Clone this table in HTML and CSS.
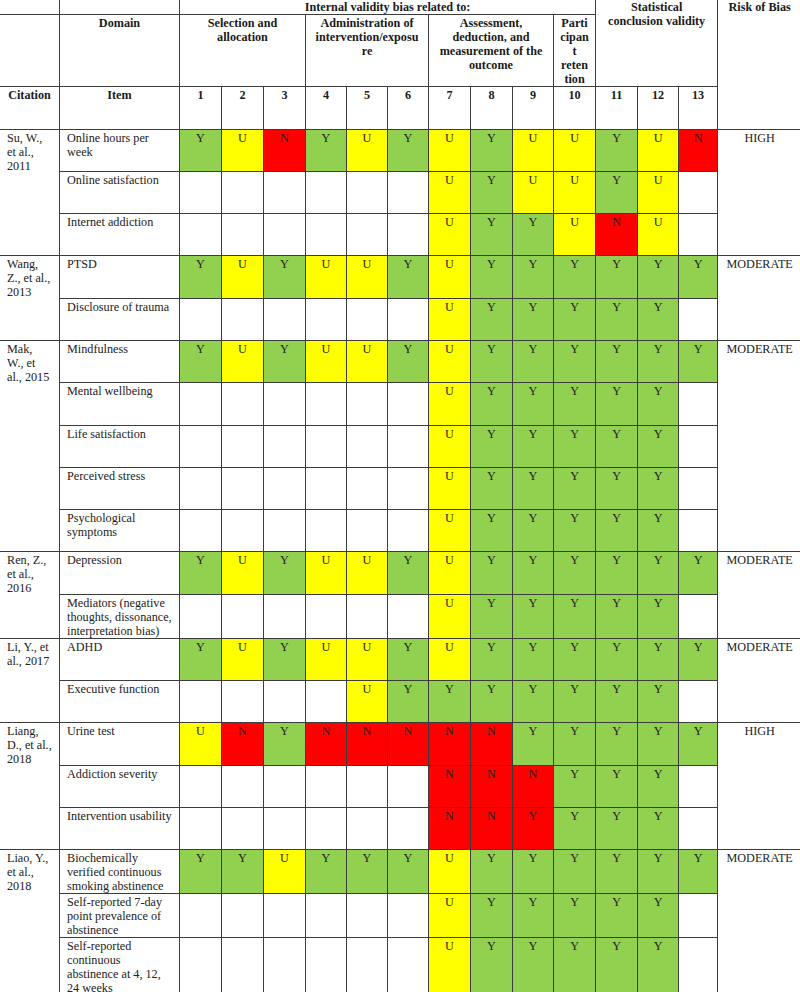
FILE: index.html
```html
<!DOCTYPE html>
<html>
<head>
<meta charset="utf-8">
<link rel="stylesheet" href="styles.css">
</head>
<body>
<table class="rob">
<colgroup>
<col class="c-cit"><col class="c-item">
<col class="c42"><col class="c42"><col class="c42">
<col class="c41"><col class="c41"><col class="c41">
<col class="c42"><col class="c42"><col class="c41"><col class="c42">
<col class="c42"><col class="c41"><col class="c39">
<col class="c-rob">
</colgroup>
<thead>
<tr class="h1">
<td></td><td></td>
<th colspan="10">Internal validity bias related to:</th>
<th colspan="3" rowspan="2" class="stat">Statistical conclusion validity</th>
<th rowspan="3">Risk of Bias</th>
</tr>
<tr class="h2">
<td></td>
<th>Domain</th>
<th colspan="3">Selection and allocation</th>
<th colspan="3" class="admin">Administration of intervention/&#8288;exposure</th>
<th colspan="3">Assessment, deduction, and measurement of the outcome</th>
<th class="narrow">Participant retention</th>
</tr>
<tr class="h3">
<th>Citation</th><th>Item</th>
<th>1</th><th>2</th><th>3</th><th>4</th><th>5</th><th>6</th><th>7</th><th>8</th><th>9</th><th>10</th><th>11</th><th>12</th><th>13</th>
</tr>
</thead>
<tbody>
<!-- Su -->
<tr class="row">
<td class="cit" rowspan="3">Su, W., et al., 2011</td>
<td class="item">Online hours per week</td>
<td class="g">Y</td><td class="y">U</td><td class="r">N</td><td class="g">Y</td><td class="y">U</td><td class="g">Y</td><td class="y">U</td><td class="g">Y</td><td class="y">U</td><td class="y">U</td><td class="g">Y</td><td class="y">U</td><td class="r">N</td>
<td class="risk" rowspan="3">HIGH</td>
</tr>
<tr class="row">
<td class="item">Online satisfaction</td>
<td></td><td></td><td></td><td></td><td></td><td></td><td class="y">U</td><td class="g">Y</td><td class="y">U</td><td class="y">U</td><td class="g">Y</td><td class="y">U</td><td></td>
</tr>
<tr class="row">
<td class="item">Internet addiction</td>
<td></td><td></td><td></td><td></td><td></td><td></td><td class="y">U</td><td class="g">Y</td><td class="g">Y</td><td class="y">U</td><td class="r">N</td><td class="y">U</td><td></td>
</tr>
<!-- Wang -->
<tr class="row">
<td class="cit" rowspan="2">Wang, Z., et al., 2013</td>
<td class="item">PTSD</td>
<td class="g">Y</td><td class="y">U</td><td class="g">Y</td><td class="y">U</td><td class="y">U</td><td class="g">Y</td><td class="y">U</td><td class="g">Y</td><td class="g">Y</td><td class="g">Y</td><td class="g">Y</td><td class="g">Y</td><td class="g">Y</td>
<td class="risk" rowspan="2">MODERATE</td>
</tr>
<tr class="row">
<td class="item">Disclosure of trauma</td>
<td></td><td></td><td></td><td></td><td></td><td></td><td class="y">U</td><td class="g">Y</td><td class="g">Y</td><td class="g">Y</td><td class="g">Y</td><td class="g">Y</td><td></td>
</tr>
<!-- Mak -->
<tr class="row">
<td class="cit" rowspan="5">Mak, <span class="keep">W., et</span> al., 2015</td>
<td class="item">Mindfulness</td>
<td class="g">Y</td><td class="y">U</td><td class="g">Y</td><td class="y">U</td><td class="y">U</td><td class="g">Y</td><td class="y">U</td><td class="g">Y</td><td class="g">Y</td><td class="g">Y</td><td class="g">Y</td><td class="g">Y</td><td class="g">Y</td>
<td class="risk" rowspan="5">MODERATE</td>
</tr>
<tr class="row">
<td class="item">Mental wellbeing</td>
<td></td><td></td><td></td><td></td><td></td><td></td><td class="y">U</td><td class="g">Y</td><td class="g">Y</td><td class="g">Y</td><td class="g">Y</td><td class="g">Y</td><td></td>
</tr>
<tr class="row">
<td class="item">Life satisfaction</td>
<td></td><td></td><td></td><td></td><td></td><td></td><td class="y">U</td><td class="g">Y</td><td class="g">Y</td><td class="g">Y</td><td class="g">Y</td><td class="g">Y</td><td></td>
</tr>
<tr class="row">
<td class="item">Perceived stress</td>
<td></td><td></td><td></td><td></td><td></td><td></td><td class="y">U</td><td class="g">Y</td><td class="g">Y</td><td class="g">Y</td><td class="g">Y</td><td class="g">Y</td><td></td>
</tr>
<tr class="row">
<td class="item">Psychological symptoms</td>
<td></td><td></td><td></td><td></td><td></td><td></td><td class="y">U</td><td class="g">Y</td><td class="g">Y</td><td class="g">Y</td><td class="g">Y</td><td class="g">Y</td><td></td>
</tr>
<!-- Ren -->
<tr class="row">
<td class="cit" rowspan="2">Ren, Z., et al., 2016</td>
<td class="item">Depression</td>
<td class="g">Y</td><td class="y">U</td><td class="g">Y</td><td class="y">U</td><td class="y">U</td><td class="g">Y</td><td class="y">U</td><td class="g">Y</td><td class="g">Y</td><td class="g">Y</td><td class="g">Y</td><td class="g">Y</td><td class="g">Y</td>
<td class="risk" rowspan="2">MODERATE</td>
</tr>
<tr class="row">
<td class="item">Mediators (negative thoughts, dissonance, interpretation bias)</td>
<td></td><td></td><td></td><td></td><td></td><td></td><td class="y">U</td><td class="g">Y</td><td class="g">Y</td><td class="g">Y</td><td class="g">Y</td><td class="g">Y</td><td></td>
</tr>
<!-- Li -->
<tr class="row">
<td class="cit" rowspan="2">Li, Y., et al., 2017</td>
<td class="item">ADHD</td>
<td class="g">Y</td><td class="y">U</td><td class="g">Y</td><td class="y">U</td><td class="y">U</td><td class="g">Y</td><td class="y">U</td><td class="g">Y</td><td class="g">Y</td><td class="g">Y</td><td class="g">Y</td><td class="g">Y</td><td class="g">Y</td>
<td class="risk" rowspan="2">MODERATE</td>
</tr>
<tr class="row">
<td class="item">Executive function</td>
<td></td><td></td><td></td><td></td><td class="y">U</td><td class="g">Y</td><td class="g">Y</td><td class="g">Y</td><td class="g">Y</td><td class="g">Y</td><td class="g">Y</td><td class="g">Y</td><td></td>
</tr>
<!-- Liang -->
<tr class="row">
<td class="cit" rowspan="3">Liang, D., et al., 2018</td>
<td class="item">Urine test</td>
<td class="y">U</td><td class="r">N</td><td class="g">Y</td><td class="r">N</td><td class="r">N</td><td class="r">N</td><td class="r">N</td><td class="r">N</td><td class="g">Y</td><td class="g">Y</td><td class="g">Y</td><td class="g">Y</td><td class="g">Y</td>
<td class="risk" rowspan="3">HIGH</td>
</tr>
<tr class="row">
<td class="item">Addiction severity</td>
<td></td><td></td><td></td><td></td><td></td><td></td><td class="r">N</td><td class="r">N</td><td class="r">N</td><td class="g">Y</td><td class="g">Y</td><td class="g">Y</td><td></td>
</tr>
<tr class="row">
<td class="item">Intervention usability</td>
<td></td><td></td><td></td><td></td><td></td><td></td><td class="r">N</td><td class="r">N</td><td class="r">Y</td><td class="g">Y</td><td class="g">Y</td><td class="g">Y</td><td></td>
</tr>
<!-- Liao -->
<tr class="row">
<td class="cit" rowspan="3">Liao, Y., et al., 2018</td>
<td class="item">Biochemically verified continuous smoking abstinence</td>
<td class="g">Y</td><td class="g">Y</td><td class="y">U</td><td class="g">Y</td><td class="g">Y</td><td class="g">Y</td><td class="y">U</td><td class="g">Y</td><td class="g">Y</td><td class="g">Y</td><td class="g">Y</td><td class="g">Y</td><td class="g">Y</td>
<td class="risk" rowspan="3">MODERATE</td>
</tr>
<tr class="row">
<td class="item">Self-reported 7-day point prevalence of abstinence</td>
<td></td><td></td><td></td><td></td><td></td><td></td><td class="y">U</td><td class="g">Y</td><td class="g">Y</td><td class="g">Y</td><td class="g">Y</td><td class="g">Y</td><td></td>
</tr>
<tr class="row last">
<td class="item">Self-reported continuous abstinence at 4, 12, 24 weeks</td>
<td></td><td></td><td></td><td></td><td></td><td></td><td class="y">U</td><td class="g">Y</td><td class="g">Y</td><td class="g">Y</td><td class="g">Y</td><td class="g">Y</td><td></td>
</tr>
</tbody>
</table>
</body>
</html>
```
FILE: styles.css
```css
html, body {
  margin: 0;
  padding: 0;
  background: #ffffff;
}

body {
  font-family: "Liberation Serif", "Times New Roman", serif;
  font-size: 12.2px;
  line-height: 14px;
  color: #222222;
}

.rob {
  border-collapse: collapse;
  table-layout: fixed;
  width: 802px;
  margin: -1px 0 0 -1px;
}

.c-cit { width: 60px; }
.c-item { width: 120px; }
.c42 { width: 42px; }
.c41 { width: 41px; }
.c39 { width: 39px; }
.c-rob { width: 84px; }

.rob th,
.rob td {
  border: 1px solid #3c3c3c;
  padding: 1px 5px 0 5px;
  vertical-align: top;
  text-align: center;
  overflow-wrap: anywhere;
}

.rob th {
  font-weight: bold;
  color: #1a1a1a;
}

.rob th.narrow {
  padding-left: 5.5px;
  padding-right: 5.5px;
}

.rob th.admin {
  padding-left: 8.5px;
  padding-right: 8.5px;
}

.rob th.stat {
  padding-left: 8px;
  padding-right: 8px;
}

.h1 th, .h1 td { height: 14px; padding-top: 0; padding-bottom: 0; }
.h2 th, .h2 td { height: 70px; }
.h3 th, .h3 td { height: 40.5px; }

.row td { height: 40.3px; }
.row.last td { height: 55px; }

.rob td.cit {
  text-align: left;
  padding-left: 7px;
  padding-right: 7.2px;
}

.keep {
  white-space: nowrap;
}

.rob td.item {
  text-align: left;
  padding-left: 7px;
  padding-right: 6px;
}

.rob td.risk {
  text-align: center;
}

.rob td.g { background: #92d050; }
.rob td.y { background: #ffff00; }
.rob td.r { background: #ff0000; }
```
